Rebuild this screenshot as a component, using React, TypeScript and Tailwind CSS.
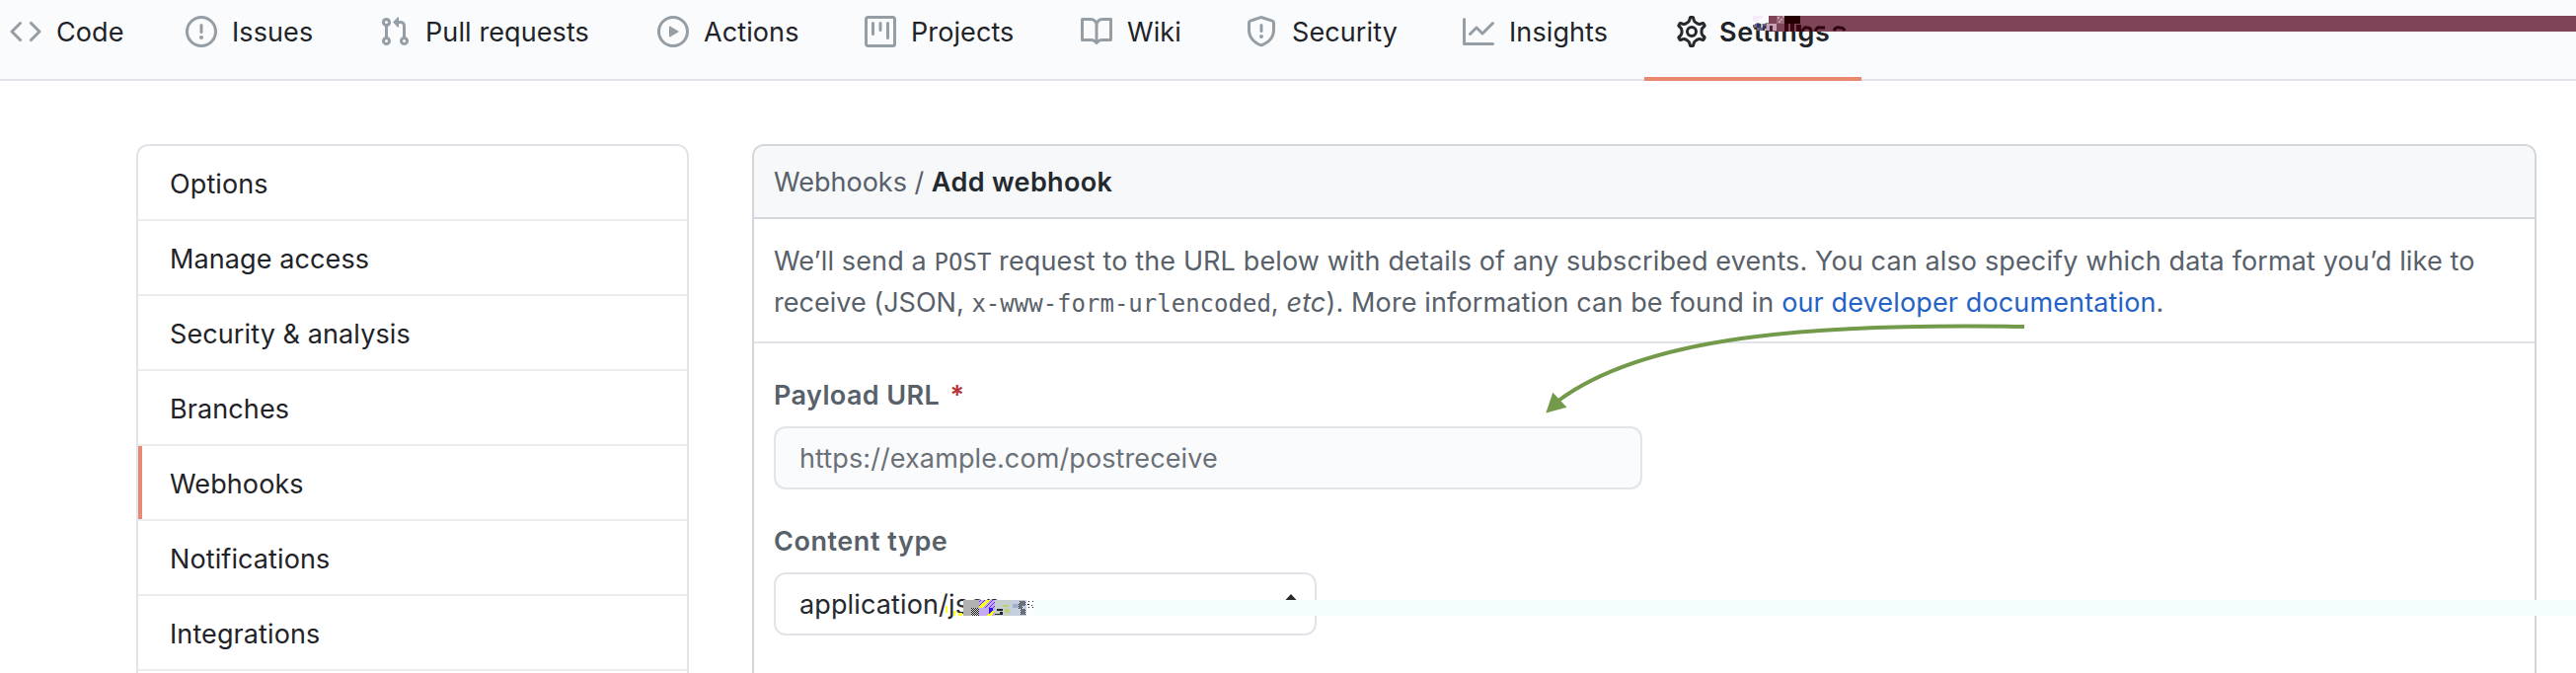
import type { ReactNode } from "react";

type Tab = { label: string; width: string; icon: ReactNode; active?: boolean };

function Icon({ d, className = "text-[#959da5]" }: { d: string; className?: string }) {
  return (
    <svg viewBox="0 0 16 16" className={`h-8 w-8 shrink-0 ${className}`} fill="currentColor" fillRule="evenodd">
      <path d={d} />
    </svg>
  );
}

function GearIcon() {
  return (
    <svg viewBox="0 0 16 16" className="h-8 w-8 shrink-0 text-[#24292e]" fill="none" stroke="currentColor">
      <g transform="translate(8 8) scale(1.115) translate(-8 -8)" strokeWidth="1.35">
        <path d="M7.429 1.525a6.593 6.593 0 011.142 0c.036.003.108.036.137.146l.289 1.105c.147.56.55.967.997 1.189.174.086.341.183.501.29.417.278.97.423 1.53.27l1.102-.303c.11-.03.175.016.195.046.219.31.41.641.573.989.014.031.022.11-.059.19l-.815.806c-.411.406-.562.957-.53 1.456a4.588 4.588 0 010 .582c-.032.499.119 1.05.53 1.456l.815.806c.08.08.073.159.059.19a6.494 6.494 0 01-.573.99c-.02.029-.086.074-.195.045l-1.103-.303c-.559-.153-1.112-.008-1.529.27-.16.107-.327.204-.5.29-.449.222-.851.628-.998 1.189l-.289 1.105c-.029.11-.101.143-.137.146a6.613 6.613 0 01-1.142 0c-.036-.003-.108-.037-.137-.146l-.289-1.105c-.147-.56-.55-.967-.997-1.189a4.502 4.502 0 01-.501-.29c-.417-.278-.97-.423-1.53-.27l-1.102.303c-.11.03-.175-.016-.195-.046a6.492 6.492 0 01-.573-.989c-.014-.031-.022-.11.059-.19l.815-.806c.411-.406.562-.957.53-1.456a4.587 4.587 0 010-.582c.032-.499-.119-1.05-.53-1.456l-.815-.806c-.08-.08-.073-.159-.059-.19a6.44 6.44 0 01.573-.99c.02-.029.086-.075.195-.045l1.103.303c.559.153 1.112.008 1.529-.27.16-.107.327-.204.5-.29.449-.222.851-.628.998-1.189l.289-1.105c.029-.11.101-.143.137-.146z" />
      </g>
      <circle cx="8" cy="8" r="2.25" strokeWidth="1.5" />
    </svg>
  );
}

const tabs: Tab[] = [
  {
    label: "Code",
    width: "w-[178px]",
    icon: <Icon d="M4.72 3.22a.75.75 0 011.06 1.06L2.06 8l3.72 3.72a.75.75 0 11-1.06 1.06L.47 8.53a.75.75 0 010-1.06l4.25-4.25zm6.56 0a.75.75 0 10-1.06 1.06L13.94 8l-3.72 3.72a.75.75 0 101.06 1.06l4.25-4.25a.75.75 0 000-1.06l-4.25-4.25z" />,
  },
  {
    label: "Issues",
    width: "w-[196px]",
    icon: <Icon d="M8 1.5a6.5 6.5 0 100 13 6.5 6.5 0 000-13zM0 8a8 8 0 1116 0A8 8 0 010 8zm9 3a1 1 0 11-2 0 1 1 0 012 0zm-.25-6.25a.75.75 0 00-1.5 0v3.5a.75.75 0 001.5 0v-3.5z" />,
  },
  {
    label: "Pull requests",
    width: "w-[282px]",
    icon: <Icon d="M7.177 3.073L9.573.677A.25.25 0 0110 .854v4.792a.25.25 0 01-.427.177L7.177 3.427a.25.25 0 010-.354zM3.75 2.5a.75.75 0 100 1.5.75.75 0 000-1.5zm-2.25.75a2.25 2.25 0 113 2.122v5.256a2.251 2.251 0 11-1.5 0V5.372A2.25 2.25 0 011.5 3.25zM11 2.5h-1V4h1a1 1 0 011 1v5.628a2.251 2.251 0 101.5 0V5A2.5 2.5 0 0011 2.5zm1 10.25a.75.75 0 111.5 0 .75.75 0 01-1.5 0zM3.75 12a.75.75 0 100 1.5.75.75 0 000-1.5z" />,
  },
  {
    label: "Actions",
    width: "w-[210px]",
    icon: <Icon d="M1.5 8a6.5 6.5 0 1113 0 6.5 6.5 0 01-13 0zM8 0a8 8 0 100 16A8 8 0 008 0zM6.379 5.227A.25.25 0 006 5.442v5.117a.25.25 0 00.379.214l4.264-2.559a.25.25 0 000-.428L6.379 5.227z" />,
  },
  {
    label: "Projects",
    width: "w-[219px]",
    icon: <Icon d="M1.75 0A1.75 1.75 0 000 1.75v12.5C0 15.216.784 16 1.75 16h12.5A1.75 1.75 0 0016 14.25V1.75A1.75 1.75 0 0014.25 0H1.75zM1.5 1.75a.25.25 0 01.25-.25h12.5a.25.25 0 01.25.25v12.5a.25.25 0 01-.25.25H1.75a.25.25 0 01-.25-.25V1.75zM11.75 3a.75.75 0 00-.75.75v7.5a.75.75 0 001.5 0v-7.5a.75.75 0 00-.75-.75zm-8.25.75a.75.75 0 011.5 0v5.5a.75.75 0 01-1.5 0v-5.5zM8 3a.75.75 0 00-.75.75v3.5a.75.75 0 001.5 0v-3.5A.75.75 0 008 3z" />,
  },
  {
    label: "Wiki",
    width: "w-[167px]",
    icon: <Icon d="M0 1.75A.75.75 0 01.75 1h4.253c1.227 0 2.317.59 3 1.501A3.744 3.744 0 0111.006 1h4.245a.75.75 0 01.75.75v10.5a.75.75 0 01-.75.75h-4.507a2.25 2.25 0 00-1.591.659l-.622.621a.75.75 0 01-1.06 0l-.622-.621A2.25 2.25 0 005.258 13H.75a.75.75 0 01-.75-.75V1.75zm8.755 3a2.25 2.25 0 012.25-2.25H14.5v9h-3.757c-.71 0-1.4.201-1.992.572l.004-7.322zm-1.504 7.324l.004-5.073-.002-2.253A2.25 2.25 0 005.003 2.5H1.5v9h3.757a3.75 3.75 0 011.994.574z" />,
  },
  {
    label: "Security",
    width: "w-[220px]",
    icon: <Icon d="M7.467.133a1.75 1.75 0 011.066 0l5.25 1.68A1.75 1.75 0 0115 3.48V7c0 1.566-.32 3.182-1.303 4.682-.983 1.498-2.585 2.813-5.032 3.855a1.7 1.7 0 01-1.33 0c-2.447-1.042-4.049-2.357-5.032-3.855C1.32 10.182 1 8.566 1 7V3.48a1.75 1.75 0 011.217-1.667l5.25-1.68zm.61 1.429a.25.25 0 00-.153 0l-5.25 1.68a.25.25 0 00-.174.238V7c0 1.358.275 2.666 1.057 3.86.784 1.194 2.121 2.34 4.366 3.297a.2.2 0 00.154 0c2.245-.956 3.582-2.104 4.366-3.298C13.225 9.666 13.5 8.36 13.5 7V3.48a.25.25 0 00-.174-.237l-5.25-1.68zM9 10.5a1 1 0 11-2 0 1 1 0 012 0zm-.25-5.75a.75.75 0 10-1.5 0v3a.75.75 0 001.5 0v-3z" />,
  },
  {
    label: "Insights",
    width: "w-[216px]",
    icon: <Icon d="M1.5 1.75a.75.75 0 00-1.5 0v12.5c0 .414.336.75.75.75h14.5a.75.75 0 000-1.5H1.5V1.75zm14.28 2.53a.75.75 0 00-1.06-1.06L10 7.94 7.53 5.47a.75.75 0 00-1.06 0L3.22 8.72a.75.75 0 001.06 1.06L7 7.06l2.47 2.47a.75.75 0 001.06 0l5.25-5.25z" />,
  },
  { label: "Settings", width: "w-[220px]", icon: <GearIcon />, active: true },
];

const menu = [
  "Options",
  "Manage access",
  "Security & analysis",
  "Branches",
  "Webhooks",
  "Notifications",
  "Integrations",
];

function NavBar() {
  return (
    <nav className="flex h-[82px] shrink-0 border-b-2 border-[#e1e4e8] bg-[#fafbfc]">
      <div className="-ml-[22px] flex h-[82px]">
        {tabs.map((t) => (
          <a
            key={t.label}
            className={`flex h-[82px] shrink-0 items-start pt-[11px] pl-8 ${t.width} ${
              t.active ? "border-b-4 border-[#ea8770]" : ""
            }`}
          >
            <span className="flex h-[42px] items-center whitespace-nowrap">
              {t.icon}
              <span
                className={
                  t.active
                    ? "ml-[12px] pt-0.5 font-semibold tracking-[0.7px]"
                    : "ml-[15px] pt-0.5 tracking-[0.1px]"
                }
              >
                {t.label}
              </span>
            </span>
          </a>
        ))}
      </div>
    </nav>
  );
}

function Sidebar() {
  return (
    <aside className="h-[700px] w-[560px] shrink-0 rounded-t-xl border-2 border-[#e1e4e8]">
      {menu.map((m) => (
        <div key={m} className="flex h-[76px] items-stretch border-b-2 border-[#eaecef]">
          <div className={m === "Webhooks" ? "w-1 bg-[#e78a75]" : "w-1"} />
          <div className="pt-[18px] pl-7 tracking-[0.1px]">{m}</div>
        </div>
      ))}
    </aside>
  );
}

function Code({ children }: { children: ReactNode }) {
  return (
    <code className="font-['DejaVu_Sans_Mono',monospace] text-[24px] leading-none tracking-normal">
      {children}
    </code>
  );
}

function Panel() {
  return (
    <main className="h-[700px] w-[1808px] shrink-0 overflow-hidden rounded-t-xl border-2 border-[#d3d7db] text-[#586069]">
      <header className="h-[74px] border-b-2 border-[#d3d7db] bg-[#f6f8fa] px-5 pt-4">
        <span>Webhooks / </span>
        <span className="font-semibold tracking-[0.35px] text-[#24292e]">Add webhook</span>
      </header>
      <p className="h-[126px] border-b-2 border-[#e1e4e8] px-5 pt-[22px] tracking-[0.13px] whitespace-nowrap">
        We’ll send a <Code>POST</Code> request to the URL below with details of any subscribed events. You can
        also specify which data format you’d like to
        <br />
        <span className="tracking-[0.02px]">receive (JSON, </span>
        <Code>x-www-form-urlencoded</Code>, <em>etc</em>). More information can be found in{" "}
        <a className="text-[#2462c6]">our developer documentation</a>.
      </p>
      <div className="flex flex-col items-start px-5 pt-8">
        <label className="font-semibold tracking-[0.4px]">
          Payload URL <span className="ml-[3px] text-[#b93038]">*</span>
        </label>
        <div className="mt-[10px] flex h-16 w-[880px] items-center rounded-xl border-2 border-[#e1e4e8] bg-[#fafbfc] pt-0.5 pl-6 tracking-[0.1px] text-[#6a7078]">
          https://example.com/postreceive
        </div>
        <label className="mt-8 font-semibold tracking-[0.55px]">Content type</label>
        <div className="mt-[10px] flex h-16 w-[550px] items-center justify-between rounded-xl border-2 border-[#e1e4e8] bg-white pr-[18px] pl-6 tracking-[0.13px] text-[#24292e]">
          <span className="pt-0.5">application/json</span>
          <svg viewBox="0 0 12 20" className="h-5 w-3" fill="#2b2b2b">
            <path d="M6 0l6 6.5H0zM6 20l6-6.5H0z" />
          </svg>
        </div>
      </div>
    </main>
  );
}

function Arrow() {
  return (
    <svg viewBox="0 0 500 100" className="absolute top-[324px] left-[1560px] h-[100px] w-[500px]">
      <path d="M491 7C270 3 105 18 19 82" fill="none" stroke="#73994a" strokeWidth="4" />
      <path d="M6.3 94.5L13.3 73.7L27.5 88.7z" fill="#73994a" />
    </svg>
  );
}

function TopStreak() {
  return (
    <svg
      viewBox="0 0 834 16"
      className="absolute top-4 left-[1776px] h-4 w-[834px]"
      shapeRendering="crispEdges"
    >
      <path d="M0 0h10v3h-4v3h-6z" fill="#f7ebfb" />
      <path d="M2 8h14v7H4v-3H0v-3h2z" fill="#6a6480" />
      <path d="M4 8h4v4h-4zM10 10h3v5h-3z" fill="#35356b" />
      <path d="M8 8h2v4h-2zM12 13h4v2h-4z" fill="#b9bfa6" />
      <path d="M16 0h818v16H16z" fill="#7e4558" />
      <path d="M14 8h10v7H14z" fill="#c7a3b3" />
      <path d="M17 10h3v6h-3z" fill="#4b2437" />
      <path d="M24 0h8v8h-8z" fill="#98687b" />
      <path d="M25 1h2v2h-2zM28 3h2v2h-2zM26 5h2v2h-2zM30 0h2v2h-2z" fill="#c79aae" />
      <path d="M32 0h16v8H32z" fill="#240003" />
      <path d="M32 8h4v8h-4zM38 8h4v8h-4zM44 9h5v7h-5z" fill="#3a0711" />
      <g fill="none" stroke="#310510" strokeWidth="3" shapeRendering="auto">
        <path d="M50 16q2-5 5-4q4 0 4 4M63 16q2-5 5-4h5M82 15q2-4 6-3q4 0 5 3" />
      </g>
    </svg>
  );
}

function BottomStreak() {
  return (
    <svg
      viewBox="0 0 1652 16"
      className="absolute top-[608px] left-[958px] h-4 w-[1652px]"
      shapeRendering="crispEdges"
    >
      <defs>
        <pattern id="check" width="2" height="2" patternUnits="userSpaceOnUse">
          <path d="M0 0h1v1H0zM1 1h1v1H1z" fill="#111" />
        </pattern>
        <pattern id="slash" width="4" height="4" patternUnits="userSpaceOnUse">
          <path d="M3 0h1v1H3zM2 1h1v1H2zM1 2h1v1H1zM0 3h1v1H0z" fill="#6a35e8" />
        </pattern>
      </defs>
      <path d="M90 0h1562v16H90z" fill="#f5feff" />
      <path d="M0 6h2v7H0zM8 11h2v5H8zM13 13h4v3h-4z" fill="#ffff1a" />
      <path d="M18 0h16v16H18z" fill="#b1b1b2" />
      <path d="M26 8h8v8h-8z" fill="#e6e6e6" />
      <path d="M26 8h8v8h-8z" fill="url(#check)" />
      <path d="M34 0h16v16H34z" fill="#c3a9f4" />
      <path d="M34 0h16v8H34z" fill="url(#slash)" />
      <path d="M42 0h3l-7 8h-4v-2zM46 11h4l-3 5h-6z" fill="#ffff14" />
      <path d="M44 8h4v3l-4 3z" fill="#2c14ee" />
      <path d="M50 0h16v16H50z" fill="#c6ced0" />
      <path d="M52 9h6v2h-6zM50 14h8v1h-8zM55 12h3v2h-3z" fill="#20251d" />
      <path d="M58 5h6v2h-6zM60 9h5v4h-5z" fill="#bdd177" />
      <path d="M66 0h16v16H66z" fill="#c5cede" />
      <path d="M75 1h6v5h-3v3h3v6h-5V9h-2V4h1z" fill="url(#check)" />
      <path d="M68 4h6v4h-6z" fill="#9db0c8" />
      <path d="M82 0h8v16h-8z" fill="#fbfdff" />
      <path d="M84 1h1v1h-1zM88 1h1v1h-1zM83 4h2v1h-2zM87 5h1v1h-1zM84 7h1v1h-1zM88 7h1v1h-1z" fill="#222" />
    </svg>
  );
}

export default function App() {
  return (
    <div className="relative flex h-[682px] w-[2610px] flex-col overflow-hidden bg-white font-['Inter',sans-serif] text-[27px] leading-[42px] text-[#1f2328]">
      <NavBar />
      <div className="flex gap-16 pt-16 pl-[138px]">
        <Sidebar />
        <Panel />
      </div>
      <Arrow />
      <TopStreak />
      <BottomStreak />
    </div>
  );
}
